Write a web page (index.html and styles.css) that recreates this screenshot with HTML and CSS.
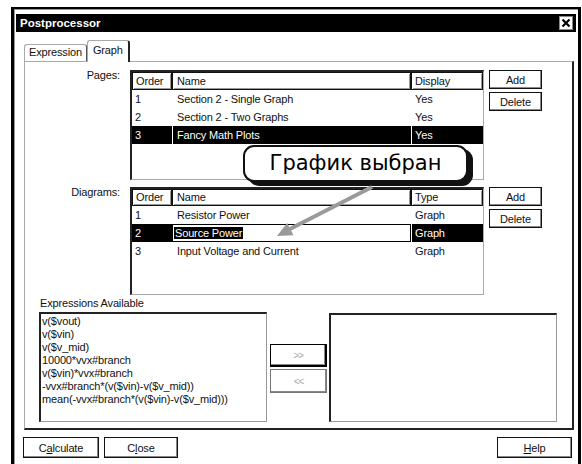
FILE: index.html
```html
<!DOCTYPE html>
<html lang="en">
<head>
    <meta charset="UTF-8">
    <meta name="viewport" content="width=device-width, initial-scale=1.0">
    <title>Postprocessor</title>
    <link rel="stylesheet" href="styles.css">
</head>
<body>

    <div class="dialog">
        <div class="titlebar">
            <span>Postprocessor</span>
            <span class="close-box">
                <svg width="10" height="10" viewBox="0 0 10 10"><path d="M1.5 1.5L8.5 8.5M8.5 1.5L1.5 8.5" stroke="#000" stroke-width="2.2"/></svg>
            </span>
        </div>

        <div class="tabs">
            <div class="tab">Expression</div>
            <div class="tab active">Graph</div>
        </div>

        <div class="panel">
            <div class="group pages">
                <div class="label">Pages:</div>
                <div class="list">
                    <div class="head">
                        <span class="col-order">Order</span>
                        <span class="col-name">Name</span>
                        <span class="col-last">Display</span>
                    </div>
                    <div class="item">
                        <span class="col-order">1</span>
                        <span class="col-name">Section 2 - Single Graph</span>
                        <span class="col-last">Yes</span>
                    </div>
                    <div class="item">
                        <span class="col-order">2</span>
                        <span class="col-name">Section 2 - Two Graphs</span>
                        <span class="col-last">Yes</span>
                    </div>
                    <div class="item sel">
                        <span class="col-order">3</span>
                        <span class="col-name">Fancy Math Plots</span>
                        <span class="col-last">Yes</span>
                    </div>
                </div>
                <div class="side">
                    <button class="btn">Add</button>
                    <button class="btn">Delete</button>
                </div>
            </div>

            <div class="group diagrams">
                <div class="label">Diagrams:</div>
                <div class="list">
                    <div class="head">
                        <span class="col-order">Order</span>
                        <span class="col-name">Name</span>
                        <span class="col-last">Type</span>
                    </div>
                    <div class="item">
                        <span class="col-order">1</span>
                        <span class="col-name">Resistor Power</span>
                        <span class="col-last">Graph</span>
                    </div>
                    <div class="item sel edit">
                        <span class="col-order">2</span>
                        <span class="col-name"><span class="hl">Source Power</span></span>
                        <span class="col-last">Graph</span>
                    </div>
                    <div class="item">
                        <span class="col-order">3</span>
                        <span class="col-name">Input Voltage and Current</span>
                        <span class="col-last">Graph</span>
                    </div>
                </div>
                <div class="side">
                    <button class="btn">Add</button>
                    <button class="btn">Delete</button>
                </div>
            </div>

            <div class="expr-label">Expressions Available</div>
            <div class="expr-row">
                <div class="box expr-list">
                    <div>v($vout)</div>
                    <div>v($vin)</div>
                    <div>v($v_mid)</div>
                    <div>10000*vvx#branch</div>
                    <div>v($vin)*vvx#branch</div>
                    <div>-vvx#branch*(v($vin)-v($v_mid))</div>
                    <div>mean(-vvx#branch*(v($vin)-v($v_mid)))</div>
                </div>
                <div class="moves">
                    <button class="btn move default">&gt;&gt;</button>
                    <button class="btn move">&lt;&lt;</button>
                </div>
                <div class="box chosen"></div>
            </div>
        </div>

        <div class="footer">
            <button class="btn wide calc">C<u>a</u>lculate</button>
            <button class="btn wide close">C<u>l</u>ose</button>
            <button class="btn wide help"><u>H</u>elp</button>
        </div>
    </div>

    <!-- annotation drawn over the dialog -->
    <div class="callout">График выбран</div>
    <svg class="pointer" width="582" height="464" viewBox="0 0 582 464">
        <line x1="372" y1="187" x2="288" y2="230" stroke="#9a9a9a" stroke-width="4"/>
        <polygon points="277,236 293.5,235.3 287.1,222.9" fill="#9a9a9a"/>
    </svg>

</body>
</html>
```

FILE: styles.css
```css
body {
    margin: 0;
    width: 582px;
    height: 464px;
    overflow: hidden;
    position: relative;
    background: #fff;
    font-family: "Liberation Sans", Arial, sans-serif;
    font-size: 11px;
    letter-spacing: -0.15px;
    color: #111;
}
.dialog {
    margin: 7px 0 0 11px;
    width: 570px;
    height: 470px;
    box-sizing: border-box;
    border: 3px solid #000;
    border-top-width: 2px;
    padding: 5px 2px 0 2px;
    box-shadow: inset 1px 1px 0 #9a9a9a;
    background: #fff;
}
.titlebar {
    height: 18px;
    background: #000;
    color: #fff;
    display: flex;
    align-items: center;
    justify-content: space-between;
    padding: 0 3px 0 4px;
    font-weight: bold;
    font-size: 11.5px;
    letter-spacing: 0;
}
.close-box {
    width: 14px;
    height: 14px;
    box-sizing: border-box;
    background: #fff;
    border: 1px solid #888;
    display: flex;
    align-items: center;
    justify-content: center;
}
.tabs {
    display: flex;
    align-items: flex-end;
    height: 20px;
    margin-top: 9px;
    padding-left: 8px;
}
.tab {
    height: 16px;
    line-height: 15px;
    padding: 0 4px;
    border: 1px solid #a8a8a8;
    border-right-color: #555;
    border-bottom: none;
    border-radius: 3px 3px 0 0;
    background: #fff;
}
.tab.active {
    height: 21px;
    line-height: 18px;
    margin-bottom: -1px;
    padding: 0 5px;
    border-right: 2px solid #222;
    position: relative;
    z-index: 1;
}
.panel {
    margin-left: 8px;
    width: 550px;
    height: 369px;
    box-sizing: border-box;
    border-top: 1px solid #aaa;
    border-left: 1px solid #aaa;
    border-right: 2px solid #222;
    border-bottom: 2px solid #222;
}
.group {
    display: flex;
    align-items: flex-start;
}
.pages {
    margin-top: 8px;
}
.diagrams {
    margin-top: 7px;
}
.label {
    width: 96px;
    padding-right: 1px;
    box-sizing: border-box;
    text-align: right;
    line-height: 13px;
    margin-top: -1px;
}
.list {
    margin-left: 9px;
    width: 354px;
    box-sizing: border-box;
    border-top: 2px solid #222;
    border-left: 2px solid #222;
    border-right: 1px solid #aaa;
    border-bottom: 1px solid #aaa;
}
.pages .list {
    height: 110px;
}
.diagrams .list {
    height: 108px;
}
.head,
.item {
    display: flex;
}
.col-order,
.col-name,
.col-last {
    flex-shrink: 0;
    box-sizing: border-box;
    white-space: nowrap;
    overflow: hidden;
}
.col-order {
    width: 40px;
    padding-left: 3px;
}
.col-name {
    width: 239px;
    padding-left: 4px;
}
.col-last {
    width: 72px;
    padding-left: 3px;
}
.head span {
    height: 17px;
    line-height: 15px;
    border: 1px solid #111;
    box-shadow: inset 1px 1px 0 #fff, inset -1px -1px 0 #999;
}
.pages .head span {
    height: 18px;
    line-height: 16px;
}
.item {
    height: 18px;
    line-height: 18px;
}
.item .col-name,
.item .col-last {
    border-left: 1px solid transparent;
}
.item.sel span {
    background: #000;
    color: #fff;
}
.item.sel .col-name,
.item.sel .col-last {
    border-left-color: #fff;
}
.item.edit .col-name {
    background: #fff;
    border: 1px solid #000;
    line-height: 16px;
    padding-left: 1px;
}
.item.edit .hl {
    background: #000;
    color: #fff;
    padding: 0 1px;
}
.side {
    margin-left: 5px;
    width: 53px;
    display: flex;
    flex-direction: column;
    gap: 3px;
}
.btn {
    display: block;
    box-sizing: border-box;
    width: 53px;
    height: 19px;
    padding: 0;
    margin: 0;
    border: 1px solid #111;
    box-shadow: inset -1px -1px 0 #888, inset 1px 1px 0 #fff;
    background: #fff;
    color: #111;
    font: inherit;
    letter-spacing: inherit;
    text-align: center;
}
.expr-label {
    margin-top: 2px;
    padding-left: 15px;
    line-height: 12px;
}
.expr-row {
    display: flex;
    align-items: flex-start;
    margin-top: 3px;
    padding-left: 14px;
}
.box {
    box-sizing: border-box;
    width: 228px;
    border-top: 2px solid #222;
    border-left: 2px solid #222;
    border-right: 1px solid #999;
    border-bottom: 1px solid #999;
}
.expr-list {
    height: 110px;
    padding: 1px 0 0 1px;
}
.expr-list div {
    line-height: 13px;
    white-space: nowrap;
}
.moves {
    margin-left: 3px;
    width: 57px;
    padding-top: 32px;
    display: flex;
    flex-direction: column;
    gap: 2px;
}
.btn.move {
    width: 57px;
    height: 24px;
    color: #aaa;
    border-color: #777;
    font-size: 10px;
    letter-spacing: -1px;
}
.btn.move.default {
    height: 23px;
    border: 1px solid #000;
    border-right-width: 2px;
    border-bottom-width: 2px;
}
.chosen {
    margin-left: 2px;
    margin-top: 1px;
    height: 109px;
}
.footer {
    display: flex;
    margin-top: 7px;
}
.btn.wide {
    height: 21px;
}
.calc {
    margin-left: 7px;
    width: 76px;
}
.btn.close {
    margin-left: 5px;
    width: 74px;
}
.btn.help {
    margin-left: auto;
    margin-right: 4px;
    width: 75px;
}
.callout {
    position: absolute;
    left: 243px;
    top: 145px;
    width: 225px;
    height: 37px;
    box-sizing: border-box;
    border: 2px solid #111;
    border-radius: 11px;
    box-shadow: 5px 4px 0 #111;
    background: #fff;
    font-family: "DejaVu Sans", sans-serif;
    font-size: 21px;
    letter-spacing: 0;
    line-height: 33px;
    text-align: center;
    color: #000;
}
.pointer {
    position: absolute;
    left: 0;
    top: 0;
    pointer-events: none;
}
```
